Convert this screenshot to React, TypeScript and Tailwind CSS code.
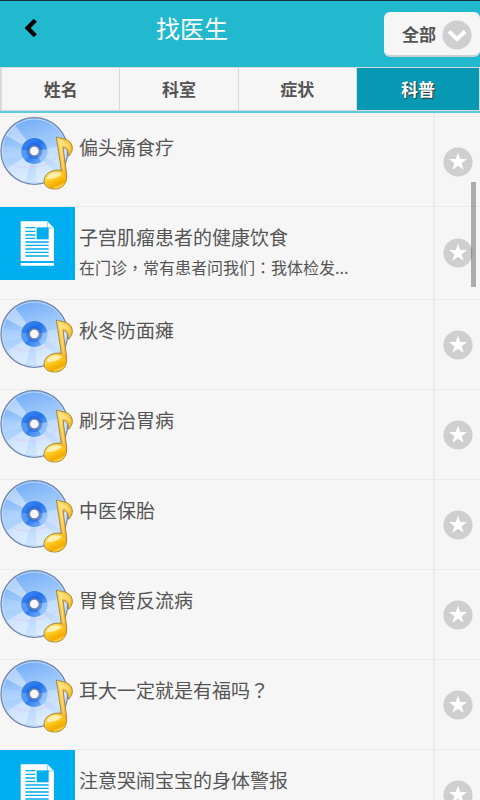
import { useState } from "react";
import clsx from "clsx";

interface Article {
  id: number;
  kind: "audio" | "text";
  title: string;
  excerpt?: string;
}

const TABS = ["姓名", "科室", "症状", "科普"];

const ARTICLES: Article[] = [
  { id: 1, kind: "audio", title: "偏头痛食疗" },
  {
    id: 2,
    kind: "text",
    title: "子宫肌瘤患者的健康饮食",
    excerpt: "在门诊，常有患者问我们：我体检发...",
  },
  { id: 3, kind: "audio", title: "秋冬防面瘫" },
  { id: 4, kind: "audio", title: "刷牙治胃病" },
  { id: 5, kind: "audio", title: "中医保胎" },
  { id: 6, kind: "audio", title: "胃食管反流病" },
  { id: 7, kind: "audio", title: "耳大一定就是有福吗？" },
  { id: 8, kind: "text", title: "注意哭闹宝宝的身体警报" },
];

// Full-width punctuation sits in the middle of its cell in the TC face
function formatText(text: string) {
  return text.split(/([，：？])/g).map((part, i) =>
    /^[，：？]$/.test(part) ? (
      <span key={i} lang="zh-TW" className="font-['Noto_Sans_CJK_TC',sans-serif]">
        {part}
      </span>
    ) : (
      part
    )
  );
}

// Shared gradients, defined once for every disc in the list
function DiscDefs() {
  return (
    <svg className="absolute size-0" aria-hidden="true">
      <defs>
        <linearGradient id="disc" x1="0.3" y1="0" x2="0.6" y2="1">
          <stop offset="0" stopColor="#72abf6" />
          <stop offset="0.45" stopColor="#a3ccfc" />
          <stop offset="1" stopColor="#d6e9ff" />
        </linearGradient>
        <linearGradient id="hub" x1="0" y1="0" x2="1" y2="1">
          <stop offset="0" stopColor="#3f8af0" />
          <stop offset="0.45" stopColor="#2673ea" />
          <stop offset="1" stopColor="#8cc0ff" />
        </linearGradient>
        <linearGradient id="stem" x1="0" y1="0" x2="1" y2="1">
          <stop offset="0" stopColor="#fff3a8" />
          <stop offset="0.4" stopColor="#fdd044" />
          <stop offset="1" stopColor="#eb9f05" />
        </linearGradient>
        <linearGradient id="head" x1="0.3" y1="0" x2="0.6" y2="1">
          <stop offset="0" stopColor="#ffe98a" />
          <stop offset="0.45" stopColor="#fdc81e" />
          <stop offset="0.8" stopColor="#f2a900" />
          <stop offset="1" stopColor="#ffe04a" />
        </linearGradient>
        <clipPath id="disc-clip">
          <circle cx="103" cy="102" r="97" />
        </clipPath>
      </defs>
    </svg>
  );
}

function AudioIcon() {
  return (
    <svg viewBox="0 0 225 219" className="h-[73px] w-[75px] shrink-0" aria-hidden="true">
      <circle cx="103" cy="102" r="100" fill="url(#disc)" stroke="#7287ab" strokeWidth="4" />
      <circle cx="103" cy="102" r="96" fill="none" stroke="#b9d8ff" strokeWidth="3" />
      <g clipPath="url(#disc-clip)" fill="#fff">
        <path d="M103 102 10 52 38 14z" opacity="0.4" />
        <path d="M103 102 0 84 0 130z" opacity="0.12" />
        <path d="M103 102 10 160 70 214z" opacity="0.35" />
        <path d="M103 102 112 214 182 184z" opacity="0.3" />
        <path d="M103 102 214 78 206 160z" opacity="0.25" />
      </g>
      <path d="M32 142Q103 170 172 122" fill="none" stroke="#dcc9f5" strokeWidth="4" opacity="0.5" />
      <circle cx="103" cy="102" r="39" fill="url(#hub)" />
      <path d="M103 102 142 97A39 39 0 0 1 124 135z" fill="#a8d0ff" opacity="0.7" />
      <path d="M103 102 64 98A39 39 0 0 0 76 130z" fill="#69a8f8" opacity="0.7" />
      <circle cx="103" cy="102" r="24" fill="#1a62e0" opacity="0.5" />
      <circle cx="103" cy="102" r="15" fill="#f7f7f7" stroke="#76879f" strokeWidth="4" />
      <path
        d="M169 60C187 66 205 64 214 81C221 97 215 107 206 118C206 101 198 91 189 91L200 172C202 202 185 216 164 216C144 216 132 206 132 191C133 171 156 156 184 160Z"
        fill="url(#stem)"
        stroke="#a8873f"
        strokeWidth="3"
        strokeLinejoin="round"
      />
      <ellipse cx="166" cy="189" rx="32" ry="25" fill="url(#head)" transform="rotate(-10 166 189)" />
      <path d="M140 185C145 169 166 164 185 169C179 181 156 189 140 185z" fill="#fff8d0" opacity="0.75" />
      <path d="M176 66 188 155 194 166 186 86C197 85 207 91 211 100C211 78 193 74 176 66z" fill="#fff" opacity="0.3" />
    </svg>
  );
}

function ArticleIcon() {
  return (
    <svg viewBox="0 0 225 219" className="h-[73px] w-[75px] shrink-0 bg-[#00aeef]" aria-hidden="true">
      <path d="M62 43h80l20 20v99H62z" fill="#fff" />
      <path d="M142 43v20h20" fill="none" stroke="#7fd4f6" strokeWidth="3" />
      <path d="M62 168h100v8H62z" fill="#fff" />
      <path d="M110 61h36v36h-36z" fill="#00aeef" />
      <path
        d="M76 62h30M76 73h30M76 84h30M76 94h30M76 105h70M76 115h70M76 126h70M76 136h70M76 147h70"
        stroke="#00aeef"
        strokeWidth="4"
      />
    </svg>
  );
}

function StarIcon() {
  return (
    <svg viewBox="0 0 30 30" className="size-[30px]" aria-hidden="true">
      <circle cx="15" cy="15" r="14.6" fill="#cfcfcf" />
      <path
        d="M15 5.6l2.2 6.4 6.8.1-5.4 4.1 2 6.5-5.6-3.9-5.6 3.9 2-6.5L6 12.100l6.800-.1z"
        fill="#fff"
      />
    </svg>
  );
}

function ArticleRow({ article }: { article: Article }) {
  const [starred, setStarred] = useState(false);

  return (
    <li
      className={clsx(
        "flex border-b border-[#ebebeb]",
        article.excerpt ? "h-[93px]" : "h-[90px]"
      )}
    >
      <a href="#" className="flex min-w-0 flex-1 gap-1">
        {article.kind === "audio" ? <AudioIcon /> : <ArticleIcon />}
        <div className="min-w-0 flex-1 pt-4">
          <h2 className="truncate text-[19px] leading-7">{formatText(article.title)}</h2>
          {article.excerpt && (
            <p className="truncate pt-0.5 text-base leading-7">{formatText(article.excerpt)}</p>
          )}
        </div>
      </a>
      <button
        type="button"
        aria-label="收藏"
        aria-pressed={starred}
        onClick={() => setStarred(!starred)}
        className="flex w-[47px] items-center justify-center border-l-2 border-[#ededed]"
      >
        <StarIcon />
      </button>
    </li>
  );
}

export default function App() {
  const [active, setActive] = useState("科普");

  return (
    <div className="h-screen overflow-hidden bg-[#f6f6f6] font-['Noto_Sans_CJK_SC',sans-serif] text-[#555]">
      <DiscDefs />
      <header className="flex h-[67px] items-start border-t border-[#12303a] bg-[#22b9ce]">
        <button type="button" aria-label="返回" className="flex h-[54px] w-[62px] items-center justify-center">
          <svg viewBox="0 0 36 54" className="h-[18px] w-3" aria-hidden="true">
            <path d="M31 4 8 27l23 23" fill="none" stroke="#000" strokeWidth="13" />
          </svg>
        </button>
        <h1 className="flex-1 pl-[94px] text-2xl leading-[54px] text-white">找医生</h1>
        <div className="relative mt-[11px]">
          <select
            aria-label="分类"
            className="h-[45px] w-24 appearance-none rounded-md border-b-2 border-[#c9d3d5] bg-[#f6f6f6] pl-[18px] text-[17px] font-bold"
          >
            <option>全部</option>
          </select>
          <svg
            viewBox="0 0 30 30"
            className="pointer-events-none absolute top-2 right-2 size-[30px]"
            aria-hidden="true"
          >
            <circle cx="15" cy="15" r="14.6" fill="#cfcfcf" />
            <path d="M7 11.500l8 7.500 8-7.500" fill="none" stroke="#fff" strokeWidth="4" />
          </svg>
        </div>
      </header>

      <nav className="flex h-11 border border-l-2 border-[#d9d9d9]">
        {TABS.map((tab) => (
          <button
            key={tab}
            type="button"
            onClick={() => setActive(tab)}
            className={clsx(
              "flex-1 border-r text-[17px] font-bold last:flex-none last:w-[122px] last:border-r-0",
              tab === active
                ? "border-[#0799b3] bg-[#0799b3] text-white [text-shadow:1px_1px_1px_#333]"
                : "border-[#d9d9d9]"
            )}
          >
            {tab}
          </button>
        ))}
      </nav>

      <main className="relative border-t-2 border-[#5fcadb]">
        <div className="flex h-1 border-b border-[#ebebeb]">
          <div className="flex-1" />
          <div className="w-[47px] border-l-2 border-[#ededed]" />
        </div>
        <ul>
          {ARTICLES.map((article) => (
            <ArticleRow key={article.id} article={article} />
          ))}
        </ul>
        <div className="absolute top-[69px] right-1 h-[105px] w-[5px] bg-black/30" />
      </main>
    </div>
  );
}
